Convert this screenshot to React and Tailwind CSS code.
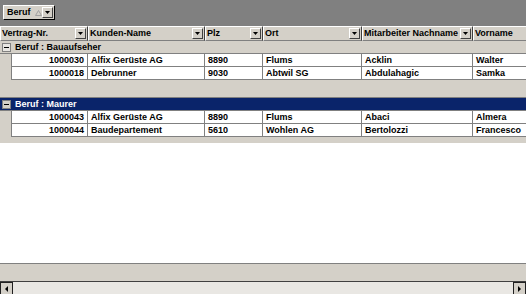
import React from "react";

const font = { fontFamily: '"Liberation Sans", Arial, sans-serif' };

// column widths follow the header dividers
const columns = [
  { label: "Vertrag-Nr.", w: "w-[88px]", filter: true },
  { label: "Kunden-Name", w: "w-[117px]", filter: true },
  { label: "Plz", w: "w-[58px]", filter: true },
  { label: "Ort", w: "w-[99px]", filter: true },
  { label: "Mitarbeiter Nachname", w: "w-[111px]", filter: true },
  { label: "Vorname", w: "w-[60px]", filter: false },
];

const groups = [
  {
    title: "Beruf : Bauaufseher",
    selected: false,
    rows: [
      ["1000030", "Alfix Gerüste AG", "8890", "Flums", "Acklin", "Walter"],
      ["1000018", "Debrunner", "9030", "Abtwil SG", "Abdulahagic", "Samka"],
    ],
  },
  {
    title: "Beruf : Maurer",
    selected: true,
    rows: [
      ["1000043", "Alfix Gerüste AG", "8890", "Flums", "Abaci", "Almera"],
      ["1000044", "Baudepartement", "5610", "Wohlen AG", "Bertolozzi", "Francesco"],
    ],
  },
];

function DropButton() {
  return (
    <div className="flex h-[11px] w-[11px] shrink-0 items-center justify-center border border-t-white border-l-white border-r-[#404040] border-b-[#404040] bg-[#d4d0c8]">
      <svg width="5" height="3" viewBox="0 0 5 3">
        <path d="M0 0h5L2.5 3z" fill="#000" />
      </svg>
    </div>
  );
}

function HeaderCell({ col }) {
  return (
    <div
      className={`${col.w} flex h-[15px] shrink-0 items-center justify-between border-t border-l border-t-white border-l-white border-r border-b border-r-[#404040] border-b-[#808080] pl-[1px] pr-[1px]`}
    >
      <span className="whitespace-nowrap">{col.label}</span>
      {col.filter ? <DropButton /> : null}
    </div>
  );
}

function MinusBox({ selected }) {
  return (
    <div
      className={`flex h-[9px] w-[9px] items-center justify-center border ${
        selected ? "border-[#808080] bg-[#d4d0c8]" : "border-[#808080] bg-[#e8e6e2]"
      }`}
    >
      <div className="h-px w-[5px] bg-black" />
    </div>
  );
}

function GroupRow({ title, selected }) {
  return (
    <div
      className={`flex h-[13px] items-center gap-[4px] border-b border-[#808080] pl-[2px] ${
        selected ? "bg-[#0a246a] text-white" : "bg-[#d4d0c8] text-black"
      }`}
    >
      <MinusBox selected={selected} />
      <span className="whitespace-nowrap">{title}</span>
    </div>
  );
}

function DataRow({ cells }) {
  return (
    <div className="flex h-[13px]">
      <div className="w-[12px] shrink-0 border-r border-[#808080] bg-[#d4d0c8]" />
      {cells.map((c, i) => (
        <div
          key={i}
          className={`${i === 0 ? "w-[76px] justify-end pr-[3px]" : columns[i].w + " pl-[3px]"} flex shrink-0 items-center overflow-hidden whitespace-nowrap border-r border-b border-[#808080] bg-white`}
        >
          {c}
        </div>
      ))}
    </div>
  );
}

function ScrollButton({ dir }) {
  return (
    <div className="flex h-[13px] w-[13px] shrink-0 items-center justify-center border border-[#202020] bg-[#d4d0c8]">
      <svg width="3" height="6" viewBox="0 0 3 6">
        {dir === "left" ? (
          <path d="M3 0v6L0 3z" fill="#000" />
        ) : (
          <path d="M0 0v6l3-3z" fill="#000" />
        )}
      </svg>
    </div>
  );
}

export default function App() {
  return (
    <div
      className="flex h-[294px] w-[526px] flex-col overflow-hidden bg-white text-[9px] font-bold leading-none text-black"
      style={font}
    >
      {/* group-by panel */}
      <div className="flex h-[26px] shrink-0 items-start bg-[#808080] pl-[3px] pt-[5px]">
        <div className="flex h-[15px] w-[52px] items-center border border-t-white border-l-white border-r-black border-b-black bg-[#d4d0c8] pl-[3px] pr-[1px]">
          <span>Beruf</span>
          <svg className="ml-[4px]" width="7" height="6" viewBox="0 0 7 6">
            <path d="M3.5 0.5L6.5 5.5H0.5z" fill="none" stroke="#a0a0a0" />
          </svg>
          <div className="ml-auto">
            <DropButton />
          </div>
        </div>
      </div>

      {/* column headers */}
      <div className="flex shrink-0 bg-[#d4d0c8]">
        {columns.map((c) => (
          <HeaderCell key={c.label} col={c} />
        ))}
      </div>

      {/* groups */}
      <GroupRow title={groups[0].title} selected={false} />
      {groups[0].rows.map((r) => (
        <DataRow key={r[0]} cells={r} />
      ))}
      <div className="h-[18px] shrink-0 border-b border-[#808080] bg-[#d4d0c8]" />
      <GroupRow title={groups[1].title} selected={true} />
      {groups[1].rows.map((r) => (
        <DataRow key={r[0]} cells={r} />
      ))}
      <div className="h-[6px] shrink-0 bg-[#d4d0c8]" />

      {/* empty area */}
      <div className="flex-1 bg-white" />

      {/* footer + scrollbar */}
      <div className="h-[18px] shrink-0 border-t border-[#808080] bg-[#d4d0c8]" />
      <div className="flex h-[13px] shrink-0 border-t border-[#404040] bg-[#e9e7e3]">
        <ScrollButton dir="left" />
        <div className="flex-1" />
        <ScrollButton dir="right" />
      </div>
    </div>
  );
}
